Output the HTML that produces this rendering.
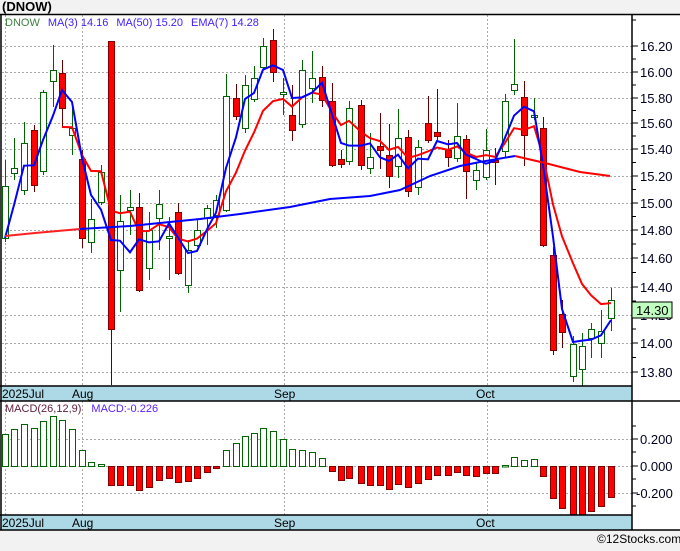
<!DOCTYPE html>
<html><head><meta charset="utf-8"><style>
body{margin:0;background:#f2f2f2;width:680px;height:546px;overflow:hidden;font-family:"Liberation Sans",sans-serif}
</style></head><body>
<svg id="s" width="680" height="546" xmlns="http://www.w3.org/2000/svg" font-family="Liberation Sans, sans-serif">
<rect x="0" y="0" width="680" height="546" fill="#f2f2f2"/>
<rect x="1" y="14" width="679" height="516" fill="#fff"/>
<text x="2" y="11" font-size="13" font-weight="bold" fill="#000">(DNOW)</text>
<g id="grid" stroke="#aaa" stroke-dasharray="2,2" stroke-width="1"></g>
<g id="mv"></g>
<g id="cd"></g>
<g id="ln"></g>
<text x="5" y="26" font-size="11"><tspan fill="#408040">DNOW</tspan><tspan fill="#4020ff" dx="8">MA(3)  14.16</tspan><tspan fill="#4020ff" dx="8">MA(50)  15.20</tspan><tspan fill="#4020ff" dx="8">EMA(7)  14.28</tspan></text>
<text x="5" y="412" font-size="11"><tspan fill="#602040">MACD(26,12,9)</tspan><tspan fill="#6020ff" dx="10">MACD:-0.226</tspan></text>
<rect x="1" y="386" width="631" height="15" fill="#add8e6"/>
<rect x="1" y="515" width="631" height="15" fill="#add8e6"/>
<g stroke="#000" stroke-width="1.5" fill="none">
<line x1="0" y1="14.5" x2="680" y2="14.5"/>
<line x1="1" y1="14" x2="1" y2="530"/>
<line x1="632" y1="14" x2="632" y2="530"/>
<line x1="0" y1="386" x2="632" y2="386"/>
<line x1="0" y1="401" x2="680" y2="401"/>
<line x1="0" y1="515" x2="632" y2="515"/>
<line x1="0" y1="530" x2="680" y2="530"/>
</g>
<g font-size="12" fill="#000">
<text x="2" y="398">2025Jul</text><text x="72" y="398">Aug</text><text x="274" y="398">Sep</text><text x="476" y="398">Oct</text>
<text x="2" y="527">2025Jul</text><text x="72" y="527">Aug</text><text x="274" y="527">Sep</text><text x="476" y="527">Oct</text>
</g>
<g id="ax" font-size="13" fill="#000022"></g>
<rect x="632" y="302" width="40" height="16" fill="#c0ffc0" stroke="#000"/>
<text x="636" y="315" font-size="13" fill="#000">14.30</text>
<text x="597" y="543" font-size="12" fill="#000">©12Stocks.com</text>
</svg>
<script>
var NS="http://www.w3.org/2000/svg";
function el(p,t,a){var e=document.createElementNS(NS,t);for(var k in a)e.setAttribute(k,a[k]);document.getElementById(p).appendChild(e);return e;}
[5,82,284,487].forEach(function(x){el("grid","line",{x1:x+.5,y1:15,x2:x+.5,y2:386});el("grid","line",{x1:x+.5,y1:401,x2:x+.5,y2:515});});
var lv=[[16.2,46],[16.0,72],[15.8,98],[15.6,123],[15.4,149],[15.2,176],[15.0,203],[14.8,230],[14.6,258],[14.4,287],[14.2,315],[14.0,343],[13.8,372]];
lv.forEach(function(l){el("grid","line",{x1:2,y1:l[1]+.5,x2:632,y2:l[1]+.5});
 el("ax","line",{x1:632,y1:l[1],x2:638,y2:l[1],stroke:"#000"});
 var t=el("ax","text",{x:640,y:l[1]+5});t.textContent=l[0].toFixed(2);});
for(var i=0;i<lv.length-1;i++){var m=(lv[i][1]+lv[i+1][1])/2;el("ax","line",{x1:632,y1:m,x2:636,y2:m,stroke:"#000"});}
el("ax","line",{x1:632,y1:20,x2:636,y2:20,stroke:"#000"});
[[0.2,439,"0.200"],[0,466,"0.000"],[-0.2,493,"-0.200"]].forEach(function(l){
 el("grid","line",{x1:2,y1:l[1]+.5,x2:632,y2:l[1]+.5});
 el("ax","line",{x1:632,y1:l[1],x2:638,y2:l[1],stroke:"#000"});
 var t=el("ax","text",{x:l[0]<0?636:640,y:l[1]+5});t.textContent=l[2];});
[426,452,479,506].forEach(function(y){el("ax","line",{x1:632,y1:y,x2:636,y2:y,stroke:"#000"});});
var C=[[5,1,186,238,160,242],[14,1,168,173,138,180],[24,1,143,190,122,195],[34,0,130,185,125,192],[43,1,92,171,90,175],[53,1,70,81,45,107],
[62,0,73,108,60,127],[72,1,128,135,108,155],[82,0,159,238,150,248],[91,1,219,242,199,253],[101,1,172,202,165,205],[111,0,41,329,41,385],
[120,1,221,270,195,312],[130,1,207,210,190,235],[139,0,207,290,193,292],[149,1,230,268,212,280],[159,1,204,218,190,250],[169,1,236,238,217,280],
[178,0,212,273,203,275],[188,1,250,285,240,293],[197,1,230,245,220,247],[207,1,208,218,205,245],[216,1,200,215,195,228],[226,1,96,210,74,212],
[236,0,98,116,84,120],[245,1,85,128,75,133],[254,1,78,99,66,102],[263,1,46,67,38,70],[273,0,40,72,29,82],[283,1,92,94,78,115],
[292,0,115,130,85,141],[302,1,70,124,60,128],[312,1,78,88,51,103],[322,0,77,100,66,107],[332,0,101,165,83,167],[341,0,159,164,150,168],
[349,1,108,161,101,165],[361,0,105,165,100,170],[370,1,157,168,133,174],[380,0,146,150,113,169],[389,0,155,176,124,188],[398,1,138,166,109,178],
[408,0,137,191,130,197],[418,1,147,187,140,195],[428,0,123,140,96,143],[437,0,132,136,89,140],[448,0,150,157,140,167],[457,1,136,158,103,162],
[466,0,139,171,135,199],[476,1,170,180,163,190],[486,1,150,177,129,180],[495,0,160,162,148,185],[505,1,101,151,94,157],[514,1,84,90,39,95],
[524,0,97,135,81,166],[534,1,115,117,98,120],[543,0,128,245,117,247],[553,0,255,350,247,355],[562,0,314,332,300,348],[573,1,344,376,336,382],
[582,1,346,369,333,386],[591,1,329,338,323,358],[601,1,331,343,310,358],[611,1,300,318,288,331]];
C.forEach(function(c){var g=c[1]?"#006400":"#660000";
 el("cd","line",{x1:c[0]+.5,y1:c[4],x2:c[0]+.5,y2:c[5],stroke:g});
 el("cd","rect",{x:c[0]-2.5,y:c[2]+.5,width:6,height:Math.max(1,c[3]-c[2]),fill:c[1]?"#fff":"#ff0000",stroke:c[1]?"#006400":"#800000"});});
var cl=C.map(function(c){return c[1]?c[2]:c[3];});
var ma3=[[5,238],[14,205]],ema=[],e=cl[0];
for(var i=0;i<cl.length;i++){ if(i>=2)ma3.push([C[i][0],(cl[i]+cl[i-1]+cl[i-2])/3]); e=i==0?cl[0]:e+0.25*(cl[i]-e); if(i>=6)ema.push([C[i][0],e]);}
function pl(pts,col){el("ln","polyline",{points:pts.map(function(p){return p.join(",");}).join(" "),fill:"none",stroke:col,"stroke-width":2});}
pl(ema,"#ff0000");
pl(ma3,"#0000ff");
pl([[5,236],[35,233],[80,229]],"#ff2020");
pl([[80,229],[130,226],[200,219],[240,214],[290,207],[330,199],[370,196],[400,190],[430,176],[460,166],[480,162],[515,156]],"#0000ff");
pl([[515,156],[545,163],[580,172],[610,176]],"#ff0000");
var M=[434,429,424,428,421,416,420,429,450,462,464,485,485,485,490,487,480,478,482,481,478,472,468,450,443,436,433,428,431,439,449,450,452,458,471,480,
478,483,485,485,489,484,487,483,479,475,475,472,475,476,473,473,465,457,460,459,476,498,508,514,515,511,506,497];
M.forEach(function(v,i){var x=C[i][0];var up=v<466;
 var y=Math.min(v,466),h=Math.max(1.5,Math.abs(v-466));
 el("mv","rect",{x:x-2.5,y:y+.5,width:6,height:h,fill:up?"#fff":"#ff0000",stroke:up?"#006400":"#800000"});});
</script>
</body></html>
